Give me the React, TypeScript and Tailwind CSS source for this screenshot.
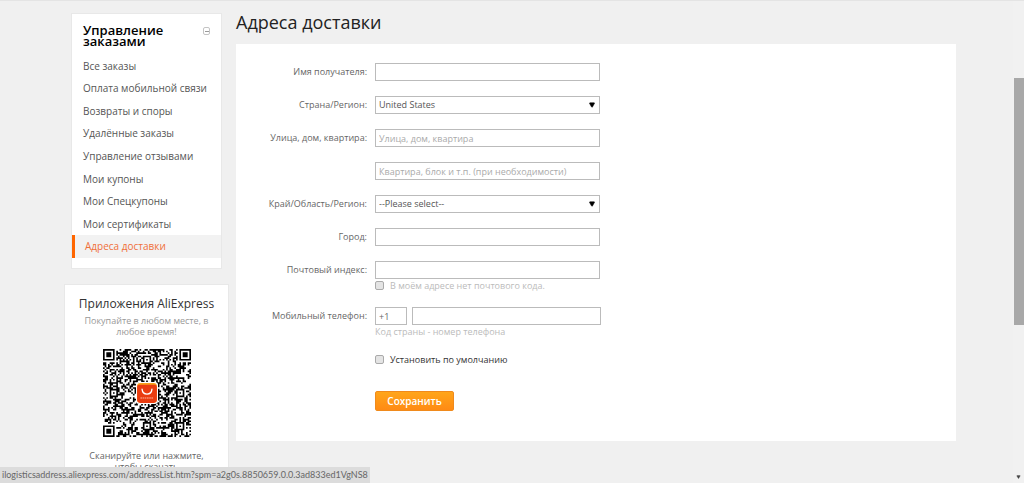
import React from 'react'
import { Triangle } from 'lucide-react'

const menu = [
  { name: 'Все заказы' },
  { name: 'Оплата мобильной связи' },
  { name: 'Возвраты и споры' },
  { name: 'Удалённые заказы' },
  { name: 'Управление отзывами' },
  { name: 'Мои купоны' },
  { name: 'Мои Спецкупоны' },
  { name: 'Мои сертификаты' },
  { name: 'Адреса доставки', active: true },
]

const QR_SIZE = 53

// Ring pattern used by the finder and alignment marks
function ring(dx: number, dy: number, radius: number) {
  const d = Math.max(Math.abs(dx), Math.abs(dy))
  if (d > radius) return null
  return radius === 4 ? d !== 4 && d !== 2 : d !== 1
}

function isDark(x: number, y: number, noise: number) {
  const finders = [[3, 3], [49, 3], [3, 49]]
  const marks = [[26, 6], [6, 26], [46, 26], [26, 46], [46, 46]]
  for (const [cx, cy] of finders) {
    const r = ring(x - cx, y - cy, 4)
    if (r !== null) return r
  }
  for (const [cx, cy] of marks) {
    const r = ring(x - cx, y - cy, 2)
    if (r !== null) return r
  }
  if (y === 6) return x % 2 === 0
  if (x === 6) return y % 2 === 0
  return noise > 0.5
}

function buildQr() {
  let seed = 20177
  let path = ''
  for (let y = 0; y < QR_SIZE; y++) {
    for (let x = 0; x < QR_SIZE; x++) {
      seed = (seed * 16807) % 2147483647
      if (isDark(x, y, seed / 2147483647)) path += `M${x} ${y}h1v1h-1z`
    }
  }
  return path
}

const qrPath = buildQr()

function QrCode() {
  return (
    <div className="relative mx-auto w-[88px]">
      <svg viewBox="0 0 53 53" className="block h-[88px] w-[88px]" role="img" aria-label="QR">
        <path d={qrPath} fill="#000" />
      </svg>
      <svg viewBox="0 0 20 20" className="absolute inset-0 m-auto h-[22px] w-[22px]">
        <rect width="20" height="20" rx="3" fill="#fff" />
        <rect x="1" y="1" width="18" height="18" rx="3" fill="#f9a01b" />
        <path d="M1 4.500a2 2 0 0 1 2-2h14a2 2 0 0 1 2 2v11.500a3 3 0 0 1-3 3H4a3 3 0 0 1-3-3z" fill="#ea3c10" />
        <path d="M5.500 6.500c.6 6 8.400 6 9 0" fill="none" stroke="#fff" strokeWidth="1.200" strokeLinecap="round" />
        <path d="M4 14.500h12" stroke="#ffb49c" strokeWidth="1" strokeDasharray="1.500 .5" />
      </svg>
    </div>
  )
}

function Sidebar() {
  return (
    <aside className="w-[165px] shrink-0 pt-3">
      <div className="mx-[7px] border border-[#e8e8e8] bg-white pt-[11px] pb-[10px]">
        <div className="flex items-start justify-between px-[11px]">
          <h2 className="text-[13px] leading-[11px] font-semibold text-black">Управление заказами</h2>
          <button type="button" aria-label="Свернуть" className="mt-[2px] flex h-[8px] w-[8px] items-center justify-center rounded-xs border border-[#c4c4c4]">
            <span className="h-px w-[4px] bg-[#999]" />
          </button>
        </div>
        <nav className="mt-2 grid h-[203px] auto-rows-fr">
          {menu.map((item) => (
            <a
              key={item.name}
              href="#"
              className={
                item.active
                  ? 'flex items-center border-l-3 border-[#f60] bg-[#f2f2f2] pl-[10px] text-[10px] text-[#f0703a]'
                  : 'flex items-center pl-[11px] text-[10px] text-[#555]'
              }
            >
              {item.name}
            </a>
          ))}
        </nav>
      </div>

      <div className="mt-[15px] border border-[#e8e8e8] bg-white pt-[11px] pb-10 text-center">
        <h2 className="text-[12px] leading-[15px] text-[#333]">Приложения AliExpress</h2>
        <p className="mt-[4px] px-4 text-[9px] leading-[11px] text-[#999]">Покупайте в любом месте, в любое время!</p>
        <div className="mt-3">
          <QrCode />
        </div>
        <p className="mt-[13px] px-4 text-[9px] leading-[11px] text-[#666]">Сканируйте или нажмите, чтобы скачать</p>
      </div>
    </aside>
  )
}

const box = 'h-[18px] w-[225px] border border-[#bbb] bg-white px-[3px] text-[9px] text-[#555] placeholder:text-[#aaa]'

function Row({ id, label, children }: { id: string; label?: string; children: React.ReactNode }) {
  return (
    <div className="flex gap-2">
      <label htmlFor={id} className="w-[131px] shrink-0 text-right text-[9px] leading-[18px] text-[#666]">
        {label}
      </label>
      <div>{children}</div>
    </div>
  )
}

function Select({ id, value }: { id: string; value: string }) {
  return (
    <div className="relative">
      <select id={id} className={`${box} block appearance-none`}>
        <option>{value}</option>
      </select>
      <Triangle className="pointer-events-none absolute top-[6px] right-[5px] h-[6px] w-[6px] rotate-180 fill-black text-black" />
    </div>
  )
}

const tick = 'h-[9px] w-[9px] appearance-none rounded-xs border border-[#aaa] bg-[#e4e4e4]'

function AddressForm() {
  return (
    <form className="flex flex-col gap-[15px] bg-white pt-[19px] pb-[30px]">
      <Row id="name" label="Имя получателя:">
        <input id="name" className={`${box} block`} />
      </Row>
      <Row id="country" label="Страна/Регион:">
        <Select id="country" value="United States" />
      </Row>
      <Row id="street" label="Улица, дом, квартира:">
        <input id="street" placeholder="Улица, дом, квартира" className={`${box} block`} />
      </Row>
      <Row id="flat">
        <input id="flat" placeholder="Квартира, блок и т.п. (при необходимости)" className={`${box} block`} />
      </Row>
      <Row id="region" label="Край/Область/Регион:">
        <Select id="region" value="--Please select--" />
      </Row>
      <Row id="city" label="Город:">
        <input id="city" className={`${box} block`} />
      </Row>
      <Row id="zip" label="Почтовый индекс:">
        <input id="zip" className={`${box} block`} />
        <label className="flex items-center gap-[6px] text-[9px] leading-[13px] text-[#bbb]">
          <input type="checkbox" className={tick} />
          В моём адресе нет почтового кода.
        </label>
      </Row>
      <Row id="phone" label="Мобильный телефон:">
        <div className="flex gap-[5px]">
          <input aria-label="Код страны" defaultValue="+1" className="h-[18px] w-8 border border-[#bbb] px-[3px] text-[9px] text-[#666]" />
          <input id="phone" className="h-[18px] w-[189px] border border-[#bbb] px-[3px] text-[9px]" />
        </div>
        <p className="text-[9px] leading-[13px] text-[#bbb]">Код страны - номер телефона</p>
      </Row>
      <div className="flex flex-col items-start gap-[25px] pl-[139px]">
        <label className="flex items-center gap-[6px] text-[9px] leading-[13px] text-[#333]">
          <input type="checkbox" className={tick} />
          Установить по умолчанию
        </label>
        <button type="submit" className="h-5 w-[79px] rounded-xs border border-[#f08a1c] bg-linear-to-b from-[#ffa51a] to-[#ff8a14] text-[10px] leading-4 font-semibold text-white">
          Сохранить
        </button>
      </div>
    </form>
  )
}

export default function App() {
  return (
    <div className="relative flex h-screen overflow-hidden border-t border-[#e4e4e4] bg-[#f0f0f0] font-['Open_Sans',sans-serif]">
      <div className="flex flex-1 items-start gap-[7px] pr-[57px] pl-16">
        <Sidebar />
        <main className="flex-1 pt-[7px]">
          <h1 className="pb-2 text-[18px] leading-7 text-[#222]">Адреса доставки</h1>
          <AddressForm />
        </main>
      </div>
      <div className="flex w-[11px] flex-col items-center justify-between bg-[#f1f1f1] pt-[77px] pb-[4px]">
        <div className="h-[247px] w-[10px] bg-[#a8a8a8]" />
        <Triangle className="h-[4px] w-[5px] rotate-180 fill-[#444] text-[#444]" />
      </div>
      <div className="absolute bottom-0 left-0 h-4 bg-[#dcdcdc] px-[2px] font-['Lato',sans-serif] text-[9px] leading-4 text-[#666]">
        ilogisticsaddress.aliexpress.com/addressList.htm?spm=a2g0s.8850659.0.0.3ad833ed1VgNS8
      </div>
    </div>
  )
}
